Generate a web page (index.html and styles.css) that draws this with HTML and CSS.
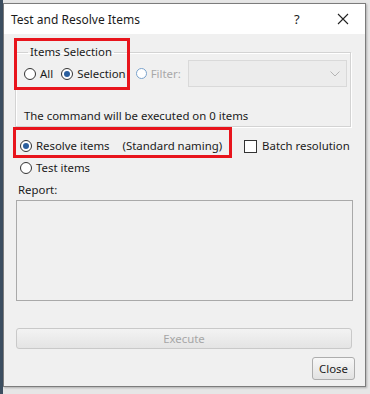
FILE: index.html
```html
<!DOCTYPE html>
<html lang="en">
<head>
    <meta charset="UTF-8">
    <title>Test and Resolve Items</title>
    <link rel="stylesheet" href="styles.css">
</head>
<body>
    <div class="window">
        <!-- Title bar -->
        <div class="titlebar">
            <span class="title">Test and Resolve Items</span>
            <span class="help">?</span>
            <span class="close-x">
                <svg width="12" height="12" viewBox="0 0 12 12"><path d="M1 1 L11 11 M11 1 L1 11" stroke="#222" stroke-width="1.1" fill="none"/></svg>
            </span>
        </div>

        <div class="content">
            <!-- Items Selection -->
            <fieldset class="group">
                <legend>Items Selection</legend>
                <div class="sel-row">
                    <span class="opt opt-all"><span class="radio"></span>All</span>
                    <span class="opt opt-sel"><span class="radio on"></span>Selection</span>
                    <span class="opt opt-filter off"><span class="radio"></span>Filter:</span>
                    <div class="combo">
                        <svg width="10" height="6" viewBox="0 0 10 6"><path d="M0.5 0.5 L5 5 L9.5 0.5" stroke="#b4b4b4" stroke-width="1" fill="none"/></svg>
                    </div>
                </div>
                <div class="note">The command will be executed on 0 items</div>
            </fieldset>

            <!-- Mode -->
            <div class="mode-row">
                <span class="opt"><span class="radio on"></span>Resolve items</span>
                <span class="naming">(Standard naming)</span>
                <span class="opt opt-batch"><span class="check"></span>Batch resolution</span>
            </div>
            <div class="mode-row test-row">
                <span class="opt"><span class="radio"></span>Test items</span>
            </div>

            <!-- Report -->
            <div class="report-label">Report:</div>
            <div class="report"></div>

            <button class="btn btn-execute" disabled>Execute</button>
            <div class="footer">
                <button class="btn btn-close">Close</button>
            </div>
        </div>

        <!-- annotation marks -->
        <div class="mark mark-1"></div>
        <div class="mark mark-2"></div>
    </div>
</body>
</html>
```

FILE: styles.css
```css
/* General */
body {
    margin: 0;
    padding: 3px 0 0 3px;
    background: linear-gradient(to right, #3c4e60 0, #3c4e60 3px, #e6e6e6 3px);
    font-family: "Noto Sans", Arial, sans-serif;
    font-size: 11.4px;
    color: #1b1b1b;
    height: 391px;
    overflow: hidden;
}

/* Window */
.window {
    position: relative;
    width: 361px;
    height: 382px;
    border: 1px solid #7c7c7c;
    background: #f0f0f0;
    box-shadow: 1px 1px 2px rgba(0, 0, 0, 0.25);
}

.titlebar {
    display: flex;
    align-items: center;
    height: 30px;
    background: #fff;
    font-size: 12px;
}

.title {
    padding-left: 7px;
    flex: 1;
}

.help {
    width: 14px;
    font-size: 13px;
}

.close-x {
    display: flex;
    margin: 0 16px 0 29px;
}

/* Content */
.content {
    padding: 0 10px 0 11px;
}

.group {
    margin: 10px 4px 0 0;
    padding: 0 0 2px 8px;
    border: 1px solid #d3d3d3;
    box-shadow: inset 1px 1px 0 #fff, 1px 1px 0 #fff;
}

.group legend {
    padding: 0 2px;
    margin-left: 4px;
    line-height: 16px;
}

.sel-row {
    display: flex;
    align-items: center;
    height: 27px;
}

.opt {
    display: flex;
    align-items: center;
    line-height: 16px;
    white-space: nowrap;
}

.opt-all { margin-right: 8px; }
.opt-sel { margin-right: 10px; }
.opt-filter { margin-right: 7px; }

.off {
    color: #a8a8a8;
}

.radio {
    flex: none;
    width: 10px;
    height: 10px;
    border: 1px solid #333;
    border-radius: 50%;
    background: #fff;
    margin-right: 4px;
    position: relative;
}

.radio.on::after {
    content: "";
    position: absolute;
    left: 2px;
    top: 2px;
    width: 6px;
    height: 6px;
    border-radius: 50%;
    background: #2b5f9e;
}

.off .radio {
    border-color: #7aa2cc;
    border-width: 1.5px;
    width: 9px;
    height: 9px;
}

.check {
    flex: none;
    width: 11px;
    height: 11px;
    border: 1px solid #333;
    background: #fff;
    margin-right: 5px;
}

.combo {
    flex: none;
    width: 151px;
    height: 25px;
    border: 1px solid #d9d9d9;
    background: #ececec;
    display: flex;
    align-items: center;
    justify-content: flex-end;
    padding-right: 6px;
}

.note {
    margin-top: 21px;
    line-height: 16px;
}

.mode-row {
    display: flex;
    align-items: center;
    margin-top: 11px;
    padding-left: 5px;
    line-height: 16px;
    white-space: nowrap;
}

.naming {
    margin-left: 13px;
}

.opt-batch {
    margin-left: 22px;
}

.test-row {
    margin-top: 6px;
}

.report-label {
    margin-top: 6px;
    padding-left: 3px;
    line-height: 16px;
}

.report {
    margin: 2px 2px 0 1px;
    height: 99px;
    border: 1px solid #a9a9a9;
    background: #f0f0f0;
}

/* Buttons */
.btn {
    font-family: inherit;
    font-size: 11.4px;
    border-radius: 3px;
    padding: 0;
}

.btn-execute {
    display: block;
    width: 336px;
    height: 21px;
    margin: 27px 0 0 1px;
    border: 1px solid #c9c9c9;
    background: linear-gradient(#f3f3f3, #e4e4e4);
    color: #a6a6a6;
}

.footer {
    display: flex;
    justify-content: flex-end;
    margin-top: 8px;
}

.btn-close {
    width: 43px;
    height: 23px;
    border: 1px solid #adadad;
    background: linear-gradient(#f7f7f7, #e2e2e2);
    color: #1b1b1b;
}

/* Annotation marks */
.mark {
    position: absolute;
    border: 3px solid #e8141c;
}

.mark-1 {
    left: 10px;
    top: 34px;
    width: 110px;
    height: 46px;
}

.mark-2 {
    left: 9px;
    top: 123px;
    width: 213px;
    height: 25px;
}
```
